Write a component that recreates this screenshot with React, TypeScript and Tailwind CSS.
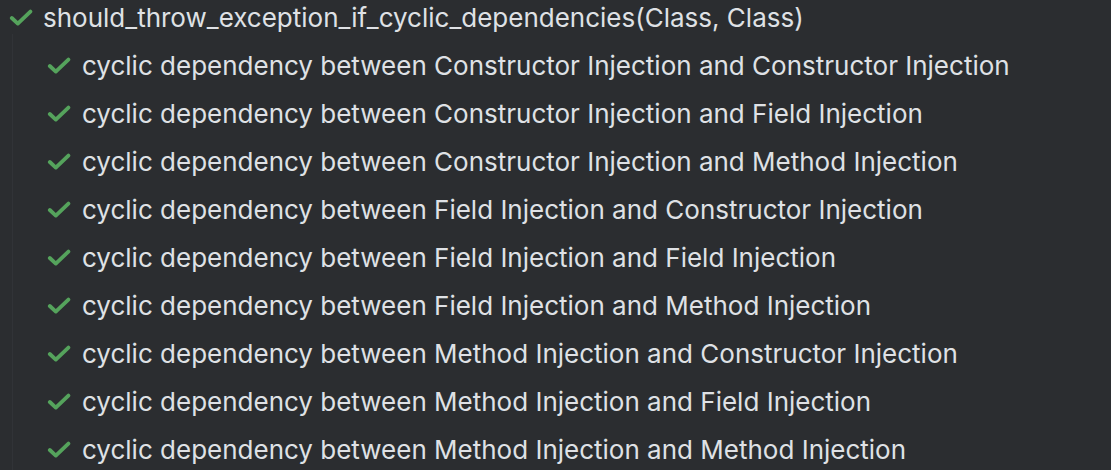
import React from 'react';

const rows = [
  'cyclic dependency between Constructor Injection and Constructor Injection',
  'cyclic dependency between Constructor Injection and Field Injection',
  'cyclic dependency between Constructor Injection and Method Injection',
  'cyclic dependency between Field Injection and Constructor Injection',
  'cyclic dependency between Field Injection and Field Injection',
  'cyclic dependency between Field Injection and Method Injection',
  'cyclic dependency between Method Injection and Constructor Injection',
  'cyclic dependency between Method Injection and Field Injection',
  'cyclic dependency between Method Injection and Method Injection',
];

const Check = () => (
  <svg width="24" height="24" viewBox="0 0 24 24" className="shrink-0">
    <path d="M2.8 13 L8.8 18.6 L21.4 6.6" fill="none" stroke="#55a35c" strokeWidth="3.8" strokeLinecap="round" strokeLinejoin="round" />
  </svg>
);

export default function App() {
  return (
    <div
      className="relative w-[1111px] h-[470px] overflow-hidden bg-[#2b2d30] text-[#dfe1e5] text-[26px]"
      style={{ fontFamily: 'Inter, "Noto Sans", sans-serif' }}
    >
      {/* tree indent guide */}
      <div className="absolute left-[12px] top-[34px] bottom-0 w-px bg-[#313337]" />

      <div className="flex flex-col -mt-[7px]">
        <div className="flex items-center h-[48px] pl-[9px] gap-[10px]">
          <Check />
          <span>should_throw_exception_if_cyclic_dependencies(Class, Class)</span>
        </div>
        {rows.map((r, i) => (
          <div key={i} className="flex items-center h-[48px] pl-[47px] gap-[11px]">
            <Check />
            <span>{r}</span>
          </div>
        ))}
      </div>
    </div>
  );
}
